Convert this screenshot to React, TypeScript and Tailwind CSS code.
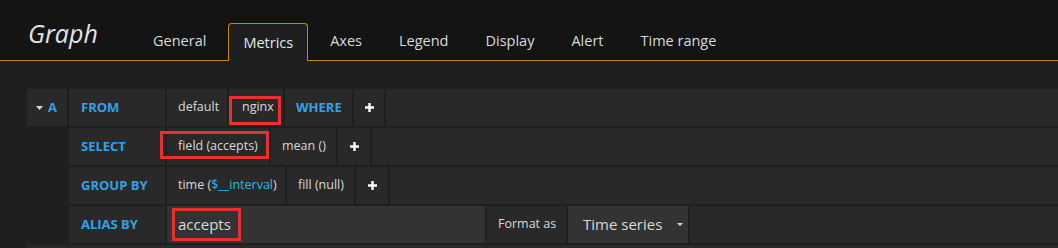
import React from "react";

const tabs = ["General", "Metrics", "Axes", "Legend", "Display", "Alert", "Time range"];

function Plus() {
  return (
    <svg width="9" height="9" viewBox="0 0 9 9">
      <path d="M4.5 0v9M0 4.5h9" stroke="#ffffff" strokeWidth="2.4" />
    </svg>
  );
}

function Caret({ w = 7, h = 4 }: { w?: number; h?: number }) {
  return (
    <svg width={w} height={h} viewBox={`0 0 ${w} ${h}`}>
      <polygon points={`0,0 ${w},0 ${w / 2},${h}`} fill="#d8d9da" />
    </svg>
  );
}

function Mark({ className }: { className: string }) {
  // red annotation box drawn over the screenshot
  return <span className={`pointer-events-none absolute border-[3px] border-[#e8312f] ${className}`} />;
}

function Label({ children }: { children: React.ReactNode }) {
  return (
    <div className="flex w-[96px] shrink-0 items-center bg-[#292929] pl-[12px] text-[13px] font-bold text-[#33a2e5]">
      {children}
    </div>
  );
}

function Cell({ w, children, className = "" }: { w: string; children?: React.ReactNode; className?: string }) {
  return (
    <div className={`relative flex shrink-0 items-center bg-[#292929] pl-[11px] text-[12.5px] text-[#d8d9da] ${w} ${className}`}>
      {children}
    </div>
  );
}

function PlusCell({ w }: { w: string }) {
  return (
    <div className={`flex shrink-0 items-center justify-center bg-[#292929] ${w}`}>
      <Plus />
    </div>
  );
}

function Filler() {
  return <div className="min-w-0 flex-1 bg-[#292929]" />;
}

export default function App() {
  return (
    <div className="h-[248px] w-[1058px] overflow-hidden bg-[#1f1f20] font-['Open_Sans',sans-serif]">
      {/* HEADER */}
      <div className="flex h-[61px] items-end border-b border-[#c7830f] bg-[#141414] pl-[28px]">
        <div className="mb-[14px] w-[110px] shrink-0 text-[25px] leading-none italic text-[#e3e3e3]">Graph</div>
        <div className="flex items-end gap-[7px]">
          {tabs.map((t) =>
            t === "Metrics" ? (
              <div
                key={t}
                className="-mb-px flex h-[38px] items-center rounded-t-[4px] border border-b-0 border-[#c7830f] bg-[#1f1f20] px-[14px] text-[14.5px] text-[#e4e7ea]"
              >
                {t}
              </div>
            ) : (
              <div key={t} className="flex h-[38px] items-center border border-transparent px-[14px] text-[14.5px] text-[#d8d9da]">
                {t}
              </div>
            )
          )}
        </div>
      </div>

      {/* QUERY ROWS */}
      <div className="flex flex-col gap-[2px] pl-[27px] pt-[28px]">
        <div className="flex h-[37px] gap-[2px]">
          <div className="flex w-[40px] shrink-0 items-center gap-[5px] bg-[#292929] pl-[9px] text-[13px] font-bold text-[#33a2e5]">
            <Caret />
            A
          </div>
          <Label>FROM</Label>
          <Cell w="w-[60px]">default</Cell>
          <Cell w="w-[54px]" className="pl-[13px]">
            nginx
            <Mark className="bottom-[1px] left-0 top-[7px] w-[52px]" />
          </Cell>
          <div className="flex w-[67px] shrink-0 items-center bg-[#292929] pl-[11px] text-[13px] font-bold text-[#33a2e5]">
            WHERE
          </div>
          <PlusCell w="w-[30px]" />
          <Filler />
        </div>

        <div className="flex h-[37px] gap-[2px]">
          <div className="w-[40px] shrink-0" />
          <Label>SELECT</Label>
          <Cell w="w-[102px]">
            field (accepts)
            <Mark className="left-[-7px] top-[3px] h-[28px] w-[109px]" />
          </Cell>
          <Cell w="w-[65px]">mean ()</Cell>
          <PlusCell w="w-[32px]" />
          <Filler />
        </div>

        <div className="flex h-[37px] gap-[2px]">
          <div className="w-[40px] shrink-0" />
          <Label>GROUP BY</Label>
          <Cell w="w-[118px]">
            <span>
              time (<span className="text-[#33b5e5]">$__interval</span>)
            </span>
          </Cell>
          <Cell w="w-[67px]">fill (null)</Cell>
          <PlusCell w="w-[32px]" />
          <Filler />
        </div>

        <div className="flex h-[37px] gap-[2px]">
          <div className="w-[40px] shrink-0" />
          <Label>ALIAS BY</Label>
          <div className="relative flex w-[318px] shrink-0 items-center bg-[#333333] pl-[11px] text-[15px] text-[#d8d9da]">
            accepts
            <Mark className="left-[5px] top-[2px] h-[33px] w-[69px]" />
          </div>
          <Cell w="w-[79px]">Format as</Cell>
          <div className="flex w-[120px] shrink-0 items-center justify-between bg-[#333333] pl-[15px] pr-[5px] text-[15px] text-[#d8d9da]">
            Time series
            <Caret w={6} h={3} />
          </div>
          <Filler />
        </div>

        <div className="flex h-[37px] gap-[2px]">
          <div className="w-[40px] shrink-0 bg-[#292929]" />
          <Filler />
        </div>
      </div>
    </div>
  );
}
